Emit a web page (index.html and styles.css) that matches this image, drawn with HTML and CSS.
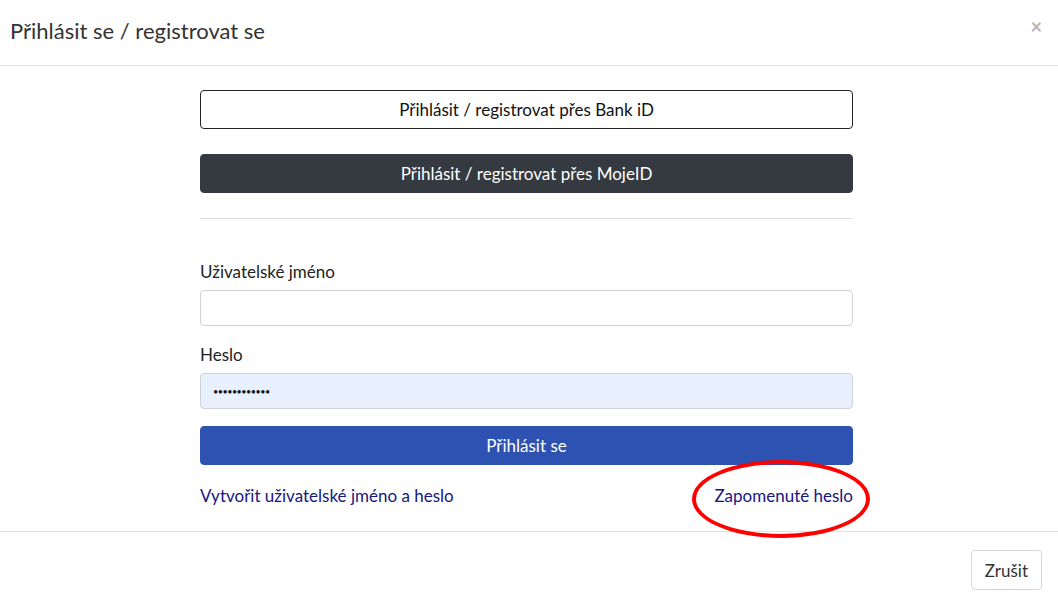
FILE: index.html
```html
<!DOCTYPE html>
<html lang="cs">
<head>
    <meta charset="UTF-8">
    <title>Přihlásit se / registrovat se</title>
    <link rel="stylesheet" href="styles.css">
</head>
<body>
    <div class="modal">
        <!-- Header -->
        <div class="modal-header">
            <h1>Přihlásit se / registrovat se</h1>
            <span class="close">&times;</span>
        </div>

        <!-- Body -->
        <div class="modal-body">
            <div class="login">
                <button class="btn btn-outline">Přihlásit / registrovat přes Bank iD</button>
                <button class="btn btn-dark">Přihlásit / registrovat přes MojeID</button>
                <hr>
                <label for="username">Uživatelské jméno</label>
                <input type="text" id="username">
                <label for="password">Heslo</label>
                <input type="password" id="password" class="filled" value="heslo1234567">
                <button class="btn btn-primary">Přihlásit se</button>
                <div class="links">
                    <a href="#">Vytvořit uživatelské jméno a heslo</a>
                    <a href="#" class="forgot">Zapomenuté heslo</a>
                </div>
            </div>
        </div>

        <!-- Footer -->
        <div class="modal-footer">
            <button class="btn-cancel">Zrušit</button>
        </div>
    </div>
</body>
</html>
```

FILE: styles.css
```css
* {
    margin: 0;
    padding: 0;
    box-sizing: border-box;
}
body {
    font-family: 'Lato', 'Noto Sans', sans-serif;
    background: #fff;
    color: #212529;
    font-size: 17px;
}

/* Header */
.modal-header {
    height: 66px;
    border-bottom: 1px solid #dee2e6;
    display: flex;
    align-items: center;
    justify-content: space-between;
    padding: 0 16px 4px 10px;
}
.modal-header h1 {
    font-size: 22px;
    font-weight: 400;
    color: #333;
}
.close {
    color: #b5b5b5;
    font-size: 20px;
    font-weight: 700;
    line-height: 1;
    margin-bottom: 10px;
}

/* Body */
.modal-body {
    padding: 24px 0 0;
    height: 466px;
    border-bottom: 1px solid #dee2e6;
}
.login {
    width: 653px;
    margin-left: 200px;
    display: flex;
    flex-direction: column;
}
.btn {
    height: 39px;
    border-radius: 4px;
    font-family: inherit;
    font-size: 17px;
    cursor: pointer;
}
.btn-outline {
    background: #fff;
    border: 1px solid #222;
    color: #111;
}
.btn-dark {
    margin-top: 25px;
    background: #343a40;
    border: 1px solid #343a40;
    color: #fff;
}
hr {
    border: none;
    border-top: 1px solid #dcdcdc;
    margin: 25px 0 41px;
}
label {
    line-height: 24px;
    margin-bottom: 6px;
    color: #222;
}
input {
    height: 36px;
    border: 1px solid #ced4da;
    border-radius: 4px;
    padding: 0 12px;
    font-size: 17px;
    font-family: inherit;
    margin-bottom: 17px;
}
input.filled {
    background: #e8f0fe;
    font-size: 9px;
    letter-spacing: -0.5px;
    color: #111;
}
.btn-primary {
    background: #2d52b1;
    border: 1px solid #2d52b1;
    color: #fff;
}
.links {
    display: flex;
    justify-content: space-between;
    margin-top: 19px;
    line-height: 24px;
}
.links a {
    color: #16167f;
    text-decoration: none;
}
.forgot {
    position: relative;
}
.forgot::after {
    content: "";
    position: absolute;
    left: -22px;
    top: -24px;
    width: 170px;
    height: 70px;
    border: 4px solid #f00;
    border-radius: 50%;
}

/* Footer */
.modal-footer {
    display: flex;
    justify-content: flex-end;
    padding: 18px 16px 0;
}
.btn-cancel {
    height: 40px;
    padding: 0 13px;
    background: #fff;
    border: 1px solid #d6d6d6;
    border-radius: 4px;
    font-family: inherit;
    font-size: 17px;
    color: #333;
}
```
